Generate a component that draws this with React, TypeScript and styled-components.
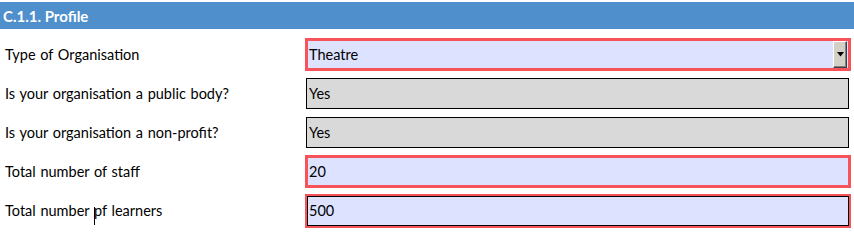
import React from "react";
import styled, { createGlobalStyle, css } from "styled-components";

const Global = createGlobalStyle`
  html, body { margin: 0; padding: 0; background: #ffffff; }
  body { font-family: Lato, "Open Sans", "Liberation Sans", sans-serif; color: #000; }
`;

const Page = styled.div`
  width: 854px;
  padding-top: 2px;
  box-sizing: border-box;
`;

const SectionHeader = styled.div`
  height: 27px;
  background: #4f8fcb;
  color: #ffffff;
  font-weight: 700;
  font-size: 15px;
  display: flex;
  align-items: center;
  padding-left: 3px;
`;

const Form = styled.div`
  margin-top: 6px;
  display: flex;
  flex-direction: column;
`;

const Row = styled.div`
  display: grid;
  grid-template-columns: 305px 546px;
  height: 39px;
  align-items: center;
`;

const Label = styled.div`
  padding-left: 5px;
  font-size: 14.5px;
  word-spacing: 1px;
  white-space: nowrap;
`;

type Variant = "required" | "readonly" | "focused";

const Field = styled.div<{ $variant: Variant }>`
  position: relative;
  box-sizing: border-box;
  display: flex;
  align-items: center;
  font-size: 14.5px;
  ${(p) =>
    p.$variant === "required" &&
    css`
      height: 33px;
      border: 3px solid #f8535b;
      background: #dde3ff;
      padding-left: 1px;
    `}
  ${(p) =>
    p.$variant === "focused" &&
    css`
      height: 34px;
      border: 2px solid #f8535b;
      background: #dde3ff;
      box-shadow: inset 0 0 0 1px #000;
      padding-left: 2px;
    `}
  ${(p) =>
    p.$variant === "readonly" &&
    css`
      height: 31px;
      margin: 0 2px 0 1px;
      border: 1px solid #000;
      background: #d9d9d9;
      padding-left: 2px;
    `}
`;

const DropButton = styled.div`
  position: absolute;
  right: 1px;
  top: 0;
  bottom: 0;
  width: 14px;
  box-sizing: border-box;
  background: #d4d0c8;
  border-top: 1px solid #ffffff;
  border-left: 1px solid #ffffff;
  border-right: 1px solid #404040;
  border-bottom: 1px solid #404040;
  box-shadow: inset -1px -1px 0 #808080;
  display: flex;
  align-items: center;
  justify-content: center;
`;

const CaretWord = styled.span`
  position: relative;
  &::before {
    content: "";
    position: absolute;
    left: 0px;
    top: 5px;
    width: 1px;
    height: 18px;
    background: #000;
  }
`;

function Arrow() {
  return (
    <svg width="7" height="5" viewBox="0 0 7 5">
      <polygon points="0,0 7,0 3.5,4.5" fill="#000" />
    </svg>
  );
}

export default function App() {
  return (
    <Page>
      <Global />
      <SectionHeader>C.1.1. Profile</SectionHeader>
      <Form>
        <Row>
          <Label>Type of Organisation</Label>
          <Field $variant="required">
            Theatre
            <DropButton>
              <Arrow />
            </DropButton>
          </Field>
        </Row>
        <Row>
          <Label>Is your organisation a public body?</Label>
          <Field $variant="readonly">Yes</Field>
        </Row>
        <Row>
          <Label>Is your organisation a non-profit?</Label>
          <Field $variant="readonly">Yes</Field>
        </Row>
        <Row>
          <Label>Total number of staff</Label>
          <Field $variant="required">20</Field>
        </Row>
        <Row>
          <Label>
            Total number <CaretWord>pf</CaretWord> learners
          </Label>
          <Field $variant="focused">500</Field>
        </Row>
      </Form>
    </Page>
  );
}
